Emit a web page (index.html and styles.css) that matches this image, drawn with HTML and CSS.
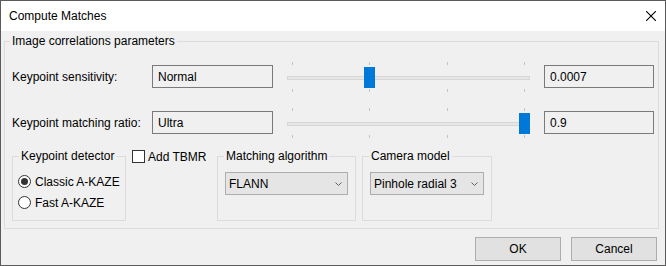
FILE: index.html
```html
<!DOCTYPE html>
<html>
<head>
<meta charset="utf-8">
<link rel="stylesheet" href="styles.css">
</head>
<body>
<div class="window">
  <div class="titlebar">
    <span class="title">Compute Matches</span>
    <svg class="close" width="10" height="10" viewBox="0 0 10 10"><path d="M0 0L10 10M10 0L0 10" stroke="#000" stroke-width="1.1" fill="none"/></svg>
  </div>
  <fieldset class="group outer">
    <legend>Image correlations parameters</legend>
    <div class="outer-body">
      <div class="params">
        <label class="plabel">Keypoint sensitivity:</label>
        <div class="textbox">Normal</div>
        <div class="slider">
          <div class="ticks"><i></i><i></i><i></i><i></i></div>
          <div class="track"><div class="rail"></div><div class="thumb" style="left:77px"></div></div>
          <div class="ticks"><i></i><i></i><i></i><i></i></div>
        </div>
        <div class="textbox">0.0007</div>

        <label class="plabel">Keypoint matching ratio:</label>
        <div class="textbox">Ultra</div>
        <div class="slider">
          <div class="ticks"><i></i><i></i><i></i><i></i></div>
          <div class="track"><div class="rail"></div><div class="thumb" style="left:232px"></div></div>
          <div class="ticks"><i></i><i></i><i></i><i></i></div>
        </div>
        <div class="textbox">0.9</div>
      </div>

      <div class="options">
        <fieldset class="group detector">
          <legend>Keypoint detector</legend>
          <div class="radios">
            <label class="radio"><span class="rb on"></span>Classic A-KAZE</label>
            <label class="radio"><span class="rb"></span>Fast A-KAZE</label>
          </div>
        </fieldset>
        <label class="check"><span class="cb"></span>Add TBMR</label>
        <fieldset class="group matching">
          <legend>Matching algorithm</legend>
          <div class="gbody">
            <div class="combo"><span>FLANN</span><svg class="chev" width="7" height="4" viewBox="0 0 7 4"><path d="M0.5 0.5L3.5 3.5L6.5 0.5" stroke="#606060" stroke-width="1" fill="none"/></svg></div>
          </div>
        </fieldset>
        <fieldset class="group camera">
          <legend>Camera model</legend>
          <div class="gbody">
            <div class="combo"><span>Pinhole radial 3</span><svg class="chev" width="7" height="4" viewBox="0 0 7 4"><path d="M0.5 0.5L3.5 3.5L6.5 0.5" stroke="#606060" stroke-width="1" fill="none"/></svg></div>
          </div>
        </fieldset>
      </div>
    </div>
  </fieldset>
  <div class="buttons">
    <button class="btn">OK</button>
    <button class="btn">Cancel</button>
  </div>
</div>
</body>
</html>
```

FILE: styles.css
```css
* { box-sizing: border-box; }
html, body { margin: 0; padding: 0; }
body {
  font: 12px "Liberation Sans", Arial, sans-serif;
  color: #000;
  background: #f0f0f0;
}
.window {
  width: 666px;
  height: 266px;
  border: 1px solid #5a5a5a;
  background: #f0f0f0;
  display: flex;
  flex-direction: column;
}
.titlebar {
  flex: none;
  height: 30px;
  background: #fff;
  display: flex;
  align-items: center;
  justify-content: space-between;
  padding: 0 9px 0 8px;
}
.close { display: block; }

.group {
  border: 1px solid #dcdcdc;
  margin: 0;
  padding: 0;
  min-width: 0;
}
.group > legend {
  padding: 0 2px;
  margin-left: 6px;
  line-height: 15px;
}
.outer {
  margin: 3px 6px 0 3px;
}
.outer > legend { margin-left: 5px; }
.outer-body {
  padding: 13px 4px 7px 7px;
}
.params {
  display: grid;
  grid-template-columns: 126px 121px 243px 110px;
  grid-template-rows: 30px 30px;
  column-gap: 14px;
  row-gap: 16px;
}
.plabel { align-self: center; line-height: 15px; white-space: nowrap; }
.textbox {
  height: 23px;
  margin-top: 3px;
  border: 1px solid #7a7a7a;
  padding-left: 5px;
  display: flex;
  align-items: center;
}
.slider {
  display: flex;
  flex-direction: column;
}
.ticks {
  height: 3px;
  display: flex;
  justify-content: space-between;
  padding: 0 5px;
}
.ticks i {
  display: block;
  width: 1px;
  height: 3px;
  background: #c4c4c4;
}
.track {
  position: relative;
  height: 21px;
  margin: 2px 0 1px;
}
.rail {
  margin-top: 9px;
  height: 4px;
  border: 1px solid #d6d6d6;
  background: #e7e7e7;
}
.thumb {
  position: absolute;
  top: 0;
  width: 11px;
  height: 21px;
  background: #0078d7;
}

.options {
  display: flex;
  align-items: stretch;
  margin-top: 11px;
}
.detector { width: 114px; }
.radios { padding: 7px 0 7px 5px; }
.radio {
  display: flex;
  align-items: center;
  height: 21px;
  gap: 4px;
}
.rb {
  width: 13px;
  height: 13px;
  border: 1px solid #333;
  border-radius: 50%;
  background: #fff;
  display: flex;
  align-items: center;
  justify-content: center;
}
.rb.on::after {
  content: "";
  width: 7px;
  height: 7px;
  border-radius: 50%;
  background: #333;
}
.check {
  align-self: flex-start;
  width: 85px;
  margin-left: 6px;
  height: 15px;
  display: flex;
  align-items: center;
  gap: 3px;
}
.cb {
  width: 13px;
  height: 13px;
  border: 1px solid #333;
  background: #fff;
}
.matching { width: 139px; }
.camera { width: 130px; margin-left: 6px; }
.gbody { padding: 8px 7px 0; }
.combo {
  height: 23px;
  border: 1px solid #adadad;
  background: #e5e5e5;
  display: flex;
  align-items: center;
  justify-content: space-between;
  padding: 0 5px 0 3px;
}
.chev { display: block; }

.buttons {
  display: flex;
  justify-content: flex-end;
  gap: 10px;
  margin: 8px 8px 0 0;
}
.btn {
  width: 86px;
  height: 24px;
  border: 1px solid #adadad;
  background: #e1e1e1;
  font: inherit;
  color: #000;
  padding: 0;
}
```
